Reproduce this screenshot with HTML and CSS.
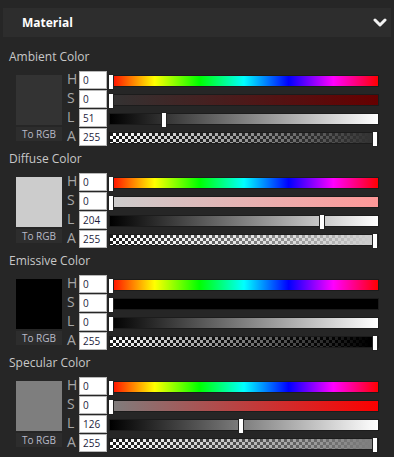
FILE: index.html
```html
<!DOCTYPE html>
<html lang="en">
<head>
  <meta charset="UTF-8" />
  <meta name="viewport" content="width=device-width, initial-scale=1.0"/>
  <title>Material</title>
  <link rel="stylesheet" href="styles.css">
</head>
<body>
  <div class="panel-header">
    <span class="panel-title">Material</span>
    <svg class="chevron" width="14" height="10" viewBox="0 0 14 10">
      <polyline points="2,2 7,7 12,2" fill="none" stroke="#f2f2f2" stroke-width="3" stroke-linecap="round" stroke-linejoin="round"/>
    </svg>
  </div>

  <section class="prop ambient">
    <div class="prop-title">Ambient Color</div>
    <div class="prop-body">
      <div class="preview">
        <div class="swatch"></div>
        <button class="to-rgb">To RGB</button>
      </div>
      <div class="channels">
        <div class="channel">
          <span class="ch-name">H</span>
          <input class="ch-value" type="text" value="0">
          <div class="track track-hue"><span class="handle" style="--v:0"></span></div>
        </div>
        <div class="channel">
          <span class="ch-name">S</span>
          <input class="ch-value" type="text" value="0">
          <div class="track track-sat"><span class="handle" style="--v:0"></span></div>
        </div>
        <div class="channel">
          <span class="ch-name">L</span>
          <input class="ch-value" type="text" value="51">
          <div class="track track-light"><span class="handle" style="--v:0.2"></span></div>
        </div>
        <div class="channel">
          <span class="ch-name">A</span>
          <input class="ch-value" type="text" value="255">
          <div class="track track-alpha"><span class="handle" style="--v:1"></span></div>
        </div>
      </div>
    </div>
  </section>

  <section class="prop diffuse">
    <div class="prop-title">Diffuse Color</div>
    <div class="prop-body">
      <div class="preview">
        <div class="swatch"></div>
        <button class="to-rgb">To RGB</button>
      </div>
      <div class="channels">
        <div class="channel">
          <span class="ch-name">H</span>
          <input class="ch-value" type="text" value="0">
          <div class="track track-hue"><span class="handle" style="--v:0"></span></div>
        </div>
        <div class="channel">
          <span class="ch-name">S</span>
          <input class="ch-value" type="text" value="0">
          <div class="track track-sat"><span class="handle" style="--v:0"></span></div>
        </div>
        <div class="channel">
          <span class="ch-name">L</span>
          <input class="ch-value" type="text" value="204">
          <div class="track track-light"><span class="handle" style="--v:0.8"></span></div>
        </div>
        <div class="channel">
          <span class="ch-name">A</span>
          <input class="ch-value" type="text" value="255">
          <div class="track track-alpha"><span class="handle" style="--v:1"></span></div>
        </div>
      </div>
    </div>
  </section>

  <section class="prop emissive">
    <div class="prop-title">Emissive Color</div>
    <div class="prop-body">
      <div class="preview">
        <div class="swatch"></div>
        <button class="to-rgb">To RGB</button>
      </div>
      <div class="channels">
        <div class="channel">
          <span class="ch-name">H</span>
          <input class="ch-value" type="text" value="0">
          <div class="track track-hue"><span class="handle" style="--v:0"></span></div>
        </div>
        <div class="channel">
          <span class="ch-name">S</span>
          <input class="ch-value" type="text" value="0">
          <div class="track track-sat"><span class="handle" style="--v:0"></span></div>
        </div>
        <div class="channel">
          <span class="ch-name">L</span>
          <input class="ch-value" type="text" value="0">
          <div class="track track-light"><span class="handle" style="--v:0"></span></div>
        </div>
        <div class="channel">
          <span class="ch-name">A</span>
          <input class="ch-value" type="text" value="255">
          <div class="track track-alpha"><span class="handle" style="--v:1"></span></div>
        </div>
      </div>
    </div>
  </section>

  <section class="prop specular">
    <div class="prop-title">Specular Color</div>
    <div class="prop-body">
      <div class="preview">
        <div class="swatch"></div>
        <button class="to-rgb">To RGB</button>
      </div>
      <div class="channels">
        <div class="channel">
          <span class="ch-name">H</span>
          <input class="ch-value" type="text" value="0">
          <div class="track track-hue"><span class="handle" style="--v:0"></span></div>
        </div>
        <div class="channel">
          <span class="ch-name">S</span>
          <input class="ch-value" type="text" value="0">
          <div class="track track-sat"><span class="handle" style="--v:0"></span></div>
        </div>
        <div class="channel">
          <span class="ch-name">L</span>
          <input class="ch-value" type="text" value="126">
          <div class="track track-light"><span class="handle" style="--v:0.494"></span></div>
        </div>
        <div class="channel">
          <span class="ch-name">A</span>
          <input class="ch-value" type="text" value="255">
          <div class="track track-alpha"><span class="handle" style="--v:1"></span></div>
        </div>
      </div>
    </div>
  </section>
</body>
</html>
```

FILE: styles.css
```css
body {
  margin: 0;
  padding: 0;
  background: #262626;
  color: #c8c8c8;
  font-family: 'Open Sans', sans-serif;
  height: 457px;
  overflow: hidden;
}

.panel-header {
  margin: 8px 3px 0;
  height: 29px;
  padding: 0 4px 0 19px;
  background: #2d2d2d;
  display: flex;
  align-items: center;
  justify-content: space-between;
}

.panel-title {
  font-size: 12px;
  font-weight: bold;
  color: #fff;
}

.chevron {
  display: block;
}

/* colour properties */
.ambient  { --swatch: #333333; --sat-to: #660000; }
.diffuse  { --swatch: #cccccc; --sat-to: #ff9999; }
.emissive { --swatch: #000000; --sat-to: #000000; }
.specular { --swatch: #7e7e7e; --sat-to: #fc0000; }

.prop {
  margin-bottom: 5px;
}

.prop:first-of-type {
  margin-top: 12px;
}

.prop-title {
  padding-left: 9px;
  font-size: 12px;
  line-height: 16px;
  margin-bottom: 6px;
}

.prop-body {
  display: flex;
  padding-left: 16px;
}

.preview {
  width: 46px;
  padding-top: 4px;
  display: flex;
  flex-direction: column;
  gap: 2px;
}

.swatch {
  height: 50px;
  background: var(--swatch);
}

.to-rgb {
  height: 14px;
  padding: 0;
  border: none;
  background: #2d2d2d;
  color: #b8bac8;
  font-family: 'Open Sans', sans-serif;
  font-size: 10px;
  line-height: 14px;
}

.channels {
  flex: 1;
  margin-left: 4px;
  padding-right: 15px;
  display: flex;
  flex-direction: column;
  gap: 1px;
}

.channel {
  height: 18px;
  display: flex;
  align-items: center;
}

.ch-name {
  width: 10px;
  height: 18px;
  margin-right: 2px;
  padding-left: 1px;
  text-align: left;
  font-size: 14px;
  line-height: 16px;
  color: #a6a6a6;
}

.ch-value {
  box-sizing: border-box;
  width: 28px;
  height: 18px;
  padding: 0 0 0 3px;
  border: 1px solid #b8b8b8;
  background: #fff;
  color: #1c1c3c;
  font-family: 'Open Sans', sans-serif;
  font-size: 10px;
}

.track {
  position: relative;
  flex: 1;
  height: 12px;
  margin: 2px 0 0 2px;
  box-sizing: border-box;
  border: 1px solid #1c1c1c;
}

.track-hue {
  background: linear-gradient(to right, #f00, #ff0, #0f0, #0ff, #00f, #f0f, #f00);
}

.track-sat {
  background: linear-gradient(to right, var(--swatch), var(--sat-to));
}

.track-light {
  background: linear-gradient(to right, #000, #fff);
}

.track-alpha {
  background:
    linear-gradient(to right, rgba(0, 0, 0, 0), var(--swatch) 97%),
    repeating-conic-gradient(#fff 0 25%, #1a1a1a 0 50%) 0 0 / 6px 6px;
}

.handle {
  position: absolute;
  top: -2px;
  left: calc(var(--v) * (100% - 4px) - 2px);
  width: 4px;
  height: 14px;
  background: #fff;
  border: 1px solid #222;
}
```
